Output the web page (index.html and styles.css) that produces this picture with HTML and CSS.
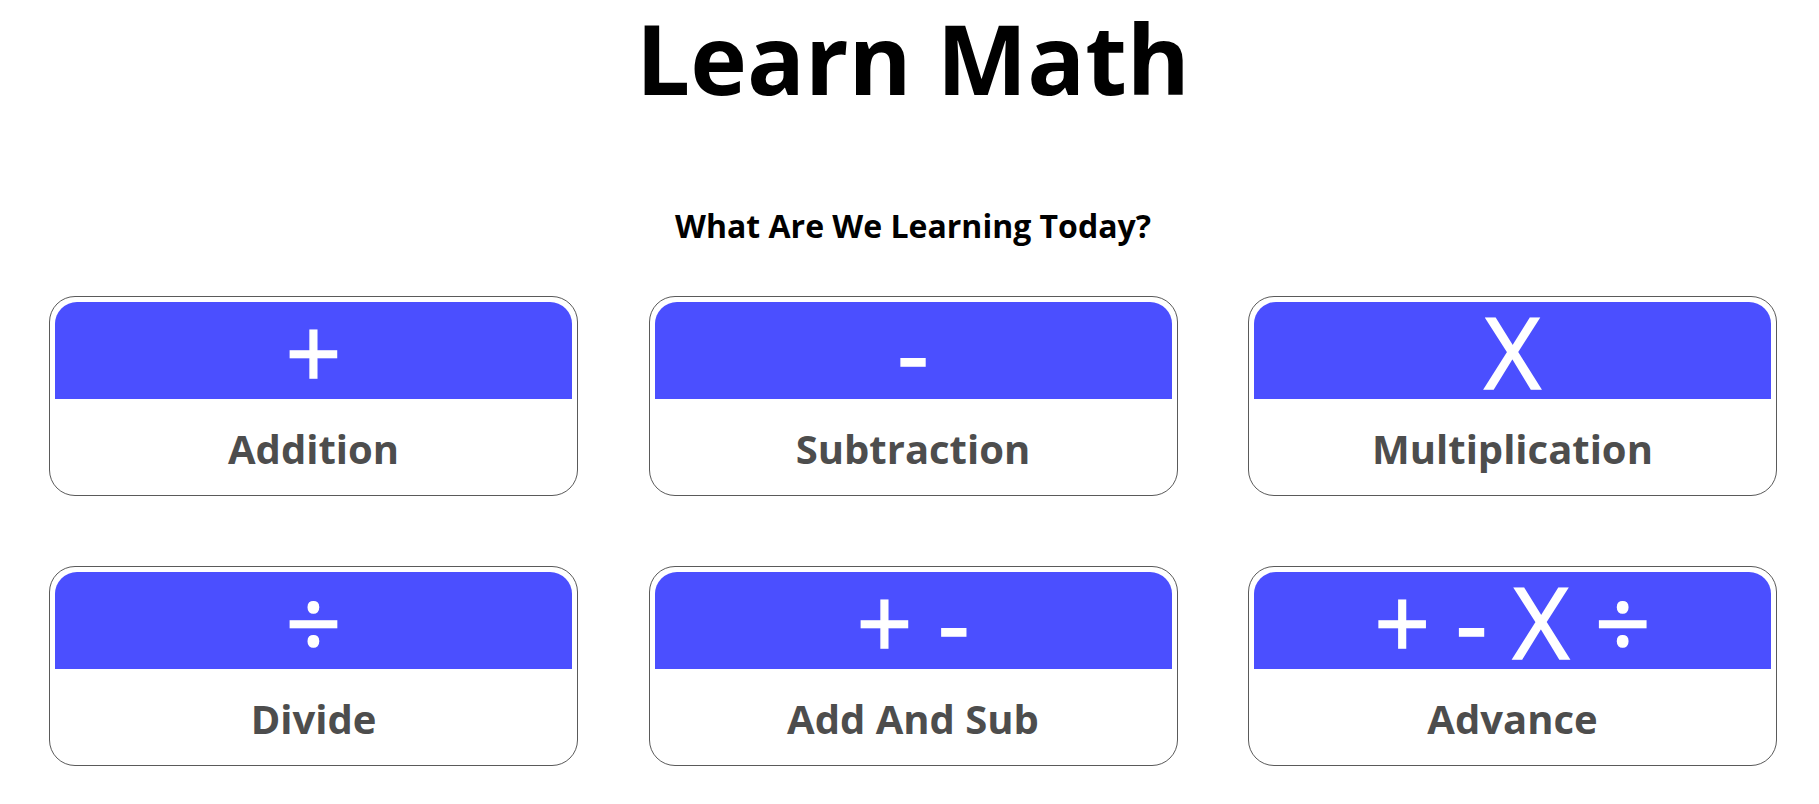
FILE: index.html
```html
<!DOCTYPE html>
<html lang="en">
<head>
<meta charset="utf-8">
<title>Learn Math</title>
<link rel="stylesheet" href="styles.css">
</head>
<body>
  <h1 class="title">Learn Math</h1>
  <h2 class="subtitle">What Are We Learning Today?</h2>
  <main class="grid">
    <a class="card" href="#">
      <div class="banner"><span>+</span></div>
      <div class="label">Addition</div>
    </a>
    <a class="card" href="#">
      <div class="banner"><span>-</span></div>
      <div class="label">Subtraction</div>
    </a>
    <a class="card" href="#">
      <div class="banner"><span>X</span></div>
      <div class="label">Multiplication</div>
    </a>
    <a class="card" href="#">
      <div class="banner"><span>÷</span></div>
      <div class="label">Divide</div>
    </a>
    <a class="card" href="#">
      <div class="banner"><span>+ -</span></div>
      <div class="label">Add And Sub</div>
    </a>
    <a class="card" href="#">
      <div class="banner"><span>+ - X ÷</span></div>
      <div class="label">Advance</div>
    </a>
  </main>
</body>
</html>
```

FILE: styles.css
```css
html, body {
  margin: 0;
  padding: 0;
  background: #ffffff;
}

body {
  font-family: "Open Sans", "Noto Sans", sans-serif;
  color: #000;
}

.title {
  margin: 0;
  padding-left: 7px;
  font-size: 96px;
  font-weight: 700;
  line-height: 1.2;
  text-align: center;
}

.subtitle {
  margin: 89px 0 0;
  padding-left: 7px;
  font-size: 32px;
  font-weight: 700;
  line-height: normal;
  text-align: center;
}

.grid {
  display: grid;
  grid-template-columns: repeat(3, 529px);
  column-gap: 70.5px;
  row-gap: 70px;
  padding: 0 42px 0 49px;
  margin-top: 49px;
}

.card {
  display: flex;
  flex-direction: column;
  box-sizing: border-box;
  width: 529px;
  padding: 5px;
  border: 1px solid #5a5a5a;
  border-radius: 26px;
  text-decoration: none;
  background: #fff;
}

.banner {
  display: flex;
  align-items: center;
  justify-content: center;
  height: 97px;
  background: #4b4fff;
  border-radius: 22px 22px 0 0;
}

.banner span {
  color: #ffffff;
  font-family: "Open Sans", sans-serif;
  font-weight: 400;
  font-size: 98px;
  line-height: normal;
  white-space: pre;
  -webkit-text-stroke: 1.5px #ffffff;
}

.label {
  padding: 22px 0 13px;
  font-size: 40px;
  font-weight: 700;
  line-height: 56px;
  color: #4d4d4d;
  text-align: center;
}
```
